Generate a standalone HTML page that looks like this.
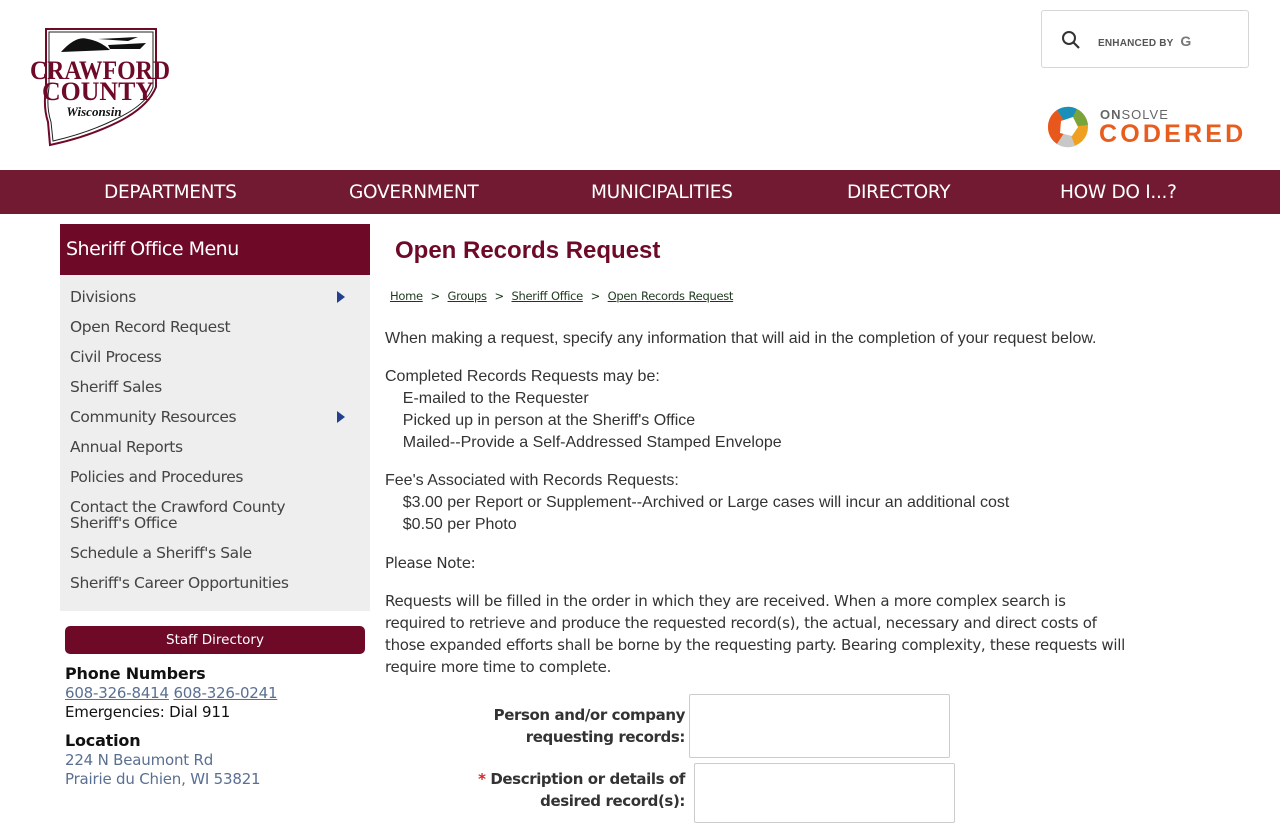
<!DOCTYPE html>
<html><head><meta charset="utf-8"><style>
*{margin:0;padding:0;box-sizing:border-box}
body{width:1280px;height:800px;overflow:hidden;background:#fff;font-family:"Liberation Sans",sans-serif;color:#333;position:relative}
.abs{position:absolute}
nav{position:absolute;left:0;top:170px;width:1280px;height:44px;background:#731a33}
nav span{position:absolute;top:12px;color:#fff;font-family:"DejaVu Sans",sans-serif;font-size:18.5px;letter-spacing:-0.3px}
.search{left:1041px;top:10px;width:208px;height:58px;border:1px solid #d6d6d6;border-radius:3px}
.mh{left:60px;top:224px;width:310px;height:51px;background:#6e0a28;color:#fff;font-family:"DejaVu Sans",sans-serif;font-size:19px;padding:14px 6px;letter-spacing:-0.5px}
.menu{left:60px;top:275px;width:310px;height:336px;background:#eee}
.menu div{position:absolute;left:10px;font-family:"DejaVu Sans",sans-serif;font-size:15.5px;color:#444;letter-spacing:-0.4px;line-height:16px}
.tri{position:absolute;left:277px;width:0;height:0;border-left:8px solid #23408e;border-top:6px solid transparent;border-bottom:6px solid transparent}
.staff{left:65px;top:626px;width:300px;height:28px;background:#6e0a28;border-radius:5px;color:#fff;text-align:center;font-family:"DejaVu Sans",sans-serif;font-size:13.5px;line-height:28px}
.side{font-family:"DejaVu Sans",sans-serif;font-size:15px;color:#111;left:65px;letter-spacing:-0.2px}
.side b{font-size:16px}
.lnk{color:#5a6f92}
h1{position:absolute;left:395px;top:237px;font-size:24px;color:#6e0a28;font-weight:bold}
.bc{left:390px;top:289px;font-family:"DejaVu Sans",sans-serif;font-size:11.5px;color:#1a3a1a;letter-spacing:-0.3px;word-spacing:0.5px}
.bc u{color:#1e3a1e}
.p{left:385px;font-size:16px;color:#333;line-height:22px}
.q{left:385px;font-family:"DejaVu Sans",sans-serif;font-size:15px;color:#333;line-height:22px;letter-spacing:-0.3px}
.lab{font-family:"DejaVu Sans",sans-serif;font-weight:bold;font-size:15px;color:#333;text-align:right;line-height:22px;letter-spacing:-0.4px}
.inp{border:1px solid #ccc;border-radius:2px;background:#fff}
</style></head><body>
<svg class="abs" style="left:28px;top:27px" width="144" height="122" viewBox="0 0 144 122">
<path d="M18 2 H128 V60 Q120 80 90 95 Q60 110 22 118 L20 95 Q15 80 18 60 Z" fill="#fff" stroke="#6e0a28" stroke-width="2"/>
<path d="M21 5 H125 V60 Q118 78 88 92 Q60 106 25 114 L23 95 Q18 80 21 60 Z" fill="none" stroke="#222" stroke-width="1"/>
<path d="M33 25 Q48 8 60 12 Q72 14 82 23 Z" fill="#111"/>
<path d="M70 12 L110 10 L100 14 Z M80 18 L118 16 L112 22 L82 22Z" fill="#111"/>
<text x="2" y="52" textLength="140" lengthAdjust="spacingAndGlyphs" font-family="Liberation Serif,serif" font-weight="bold" font-size="26" fill="#6e0a28">CRAWFORD</text>
<text x="14" y="73" textLength="112" lengthAdjust="spacingAndGlyphs" font-family="Liberation Serif,serif" font-weight="bold" font-size="26" fill="#6e0a28">COUNTY</text>
<text x="66" y="89" text-anchor="middle" font-family="Liberation Serif,serif" font-style="italic" font-weight="bold" font-size="13" fill="#111">Wisconsin</text>
</svg>
<div class="abs search">
<svg class="abs" style="left:19px;top:19px" width="20" height="20" viewBox="0 0 20 20"><circle cx="8" cy="8" r="6" fill="none" stroke="#333" stroke-width="2"/><path d="M12.5 12.5 L18 18" stroke="#333" stroke-width="2.2"/></svg>
<span class="abs" style="left:56px;top:22px;font-size:10px;color:#555;font-weight:bold;letter-spacing:0.2px">ENHANCED BY <span style="font-size:14px;color:#777;margin-left:4px">G</span></span>
</div>
<svg class="abs" style="left:1047px;top:105px" width="44" height="44" viewBox="0 0 44 44">
<circle cx="21" cy="22" r="20" fill="#f0a020"/>
<path d="M21 22 L1 22 A20 20 0 0 1 10 5Z" fill="#e8581d"/><path d="M21 22 L10 5 A20 20 0 0 1 30 4Z" fill="#1b8fb8"/><path d="M21 22 L30 4 A20 20 0 0 1 41 20Z" fill="#7aa33a"/><path d="M21 22 L10 39 A20 20 0 0 1 1 22Z" fill="#e8581d"/><path d="M21 22 L28 41 A20 20 0 0 1 10 39Z" fill="#c8c8c8"/>
<path d="M14 16 L26 12 L31 22 L25 31 L13 28Z" fill="#fff"/></svg>
<div class="abs" style="left:1100px;top:107px;font-size:13px;color:#666;letter-spacing:1px"><b>ON</b>SOLVE</div>
<div class="abs" style="left:1099px;top:120px;font-size:25px;color:#e85c1e;font-weight:bold;letter-spacing:3.2px">CODERED</div>
<nav><span style="left:104px">DEPARTMENTS</span><span style="left:349px">GOVERNMENT</span><span style="left:591px">MUNICIPALITIES</span><span style="left:847px">DIRECTORY</span><span style="left:1060px">HOW DO I...?</span></nav>
<div class="abs mh">Sheriff Office Menu</div>
<div class="abs menu">
<div style="top:14px">Divisions</div><i class="tri" style="top:16px"></i>
<div style="top:44px">Open Record Request</div>
<div style="top:74px">Civil Process</div>
<div style="top:104px">Sheriff Sales</div>
<div style="top:134px">Community Resources</div><i class="tri" style="top:136px"></i>
<div style="top:164px">Annual Reports</div>
<div style="top:194px">Policies and Procedures</div>
<div style="top:224px">Contact the Crawford County<br>Sheriff's Office</div>
<div style="top:270px">Schedule a Sheriff's Sale</div>
<div style="top:300px">Sheriff's Career Opportunities</div>
</div>
<div class="abs staff">Staff Directory</div>
<div class="abs side" style="top:664px;line-height:19px"><b>Phone Numbers</b><br><u class="lnk">608-326-8414</u> <u class="lnk">608-326-0241</u><br>Emergencies: Dial 911</div>
<div class="abs side" style="top:731px;line-height:19px"><b>Location</b><br><span class="lnk">224 N Beaumont Rd<br>Prairie du Chien, WI 53821</span></div>
<h1>Open Records Request</h1>
<div class="abs bc"><u>Home</u> &nbsp;&gt;&nbsp; <u>Groups</u> &nbsp;&gt;&nbsp; <u>Sheriff Office</u> &nbsp;&gt;&nbsp; <u>Open Records Request</u></div>
<div class="abs p" style="top:328px">When making a request, specify any information that will aid in the completion of your request below.</div>
<div class="abs p" style="top:366px">Completed Records Requests may be:<br>&nbsp;&nbsp;&nbsp;&nbsp;E-mailed to the Requester<br>&nbsp;&nbsp;&nbsp;&nbsp;Picked up in person at the Sheriff's Office<br>&nbsp;&nbsp;&nbsp;&nbsp;Mailed--Provide a Self-Addressed Stamped Envelope</div>
<div class="abs p" style="top:470px">Fee's Associated with Records Requests:<br>&nbsp;&nbsp;&nbsp;&nbsp;$3.00 per Report or Supplement--Archived or Large cases will incur an additional cost<br>&nbsp;&nbsp;&nbsp;&nbsp;$0.50 per Photo</div>
<div class="abs q" style="top:552px">Please Note:</div>
<div class="abs q" style="top:590px;width:765px">Requests will be filled in the order in which they are received. When a more complex search is<br>required to retrieve and produce the requested record(s), the actual, necessary and direct costs of<br>those expanded efforts shall be borne by the requesting party. Bearing complexity, these requests will<br>require more time to complete.</div>
<div class="abs lab" style="left:440px;top:704px;width:245px">Person and/or company<br>requesting records:</div>
<div class="abs inp" style="left:689px;top:694px;width:261px;height:64px"></div>
<div class="abs lab" style="left:440px;top:768px;width:245px"><span style="color:#d22">*</span> Description or details of<br>desired record(s):</div>
<div class="abs inp" style="left:694px;top:763px;width:261px;height:60px"></div>
</body></html>
